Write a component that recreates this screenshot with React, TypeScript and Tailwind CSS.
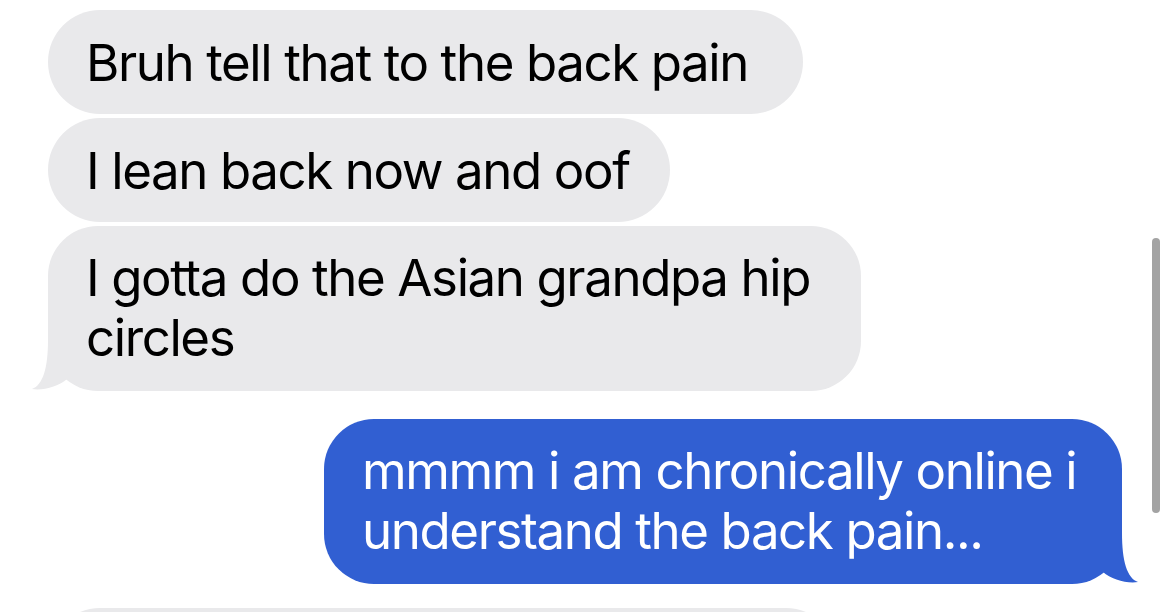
import React from 'react';

const font = { fontFamily: 'Inter, "Liberation Sans", sans-serif' };

const GrayTail = () => (
    <svg className="absolute left-[-17px] bottom-0" width="70" height="52" viewBox="-17 -51 70 52">
        <path d="M0 -50 C0 -22 -5 -5 -16 -1 C-5 1 11 -4 19 -11 L19 -50 Z" fill="#e9e9eb" />
    </svg>
);

const BlueTail = () => (
    <svg className="absolute right-[-17px] bottom-0" width="70" height="52" viewBox="-53 -51 70 52">
        <path d="M0 -50 C0 -22 5 -5 16 -1 C5 1 -11 -4 -19 -11 L-19 -50 Z" fill="#315fd2" />
    </svg>
);

export default function App() {
    return (
        <div className="relative w-[1170px] h-[612px] overflow-hidden bg-white" style={font}>
            <div className="flex flex-col pt-[10px]">
                <div className="flex flex-col gap-[4px] pl-[48px]">
                    <div className="w-[755px] h-[104px] rounded-[52px] bg-[#e9e9eb] pl-[38px] pt-[23px] text-[51px] leading-[60px] tracking-[-1.4px] text-black whitespace-nowrap">
                        Bruh tell that to the back pain
                    </div>
                    <div className="w-[622px] h-[104px] rounded-[52px] bg-[#e9e9eb] pl-[38px] pt-[23px] text-[51px] leading-[60px] tracking-[-1.4px] text-black whitespace-nowrap">
                        I lean back now and oof
                    </div>
                    <div className="relative w-[813px] h-[165px] rounded-[50px] bg-[#e9e9eb] pl-[38px] pt-[22px] text-[51px] leading-[60px] tracking-[-1.4px] text-black whitespace-nowrap">
                        I gotta do the Asian grandpa hip
                        <br />
                        circles
                        <GrayTail />
                    </div>
                </div>

                <div className="flex justify-end pr-[48px] mt-[28px]">
                    <div className="relative w-[798px] h-[165px] rounded-[50px] bg-[#315fd2] pl-[38px] pt-[22px] text-[51px] leading-[60px] tracking-[-1.4px] text-white whitespace-nowrap">
                        mmmm i am chronically online i
                        <br />
                        understand the back pain...
                        <BlueTail />
                    </div>
                </div>

                <div className="pl-[48px] mt-[24px]">
                    <div className="w-[790px] h-[104px] rounded-[52px] bg-[#e9e9eb]" />
                </div>
            </div>

            {/* scroll indicator */}
            <div className="absolute left-[1152px] top-[238px] w-[8px] h-[275px] rounded-full bg-[#a3a3a3]" />
        </div>
    );
}
